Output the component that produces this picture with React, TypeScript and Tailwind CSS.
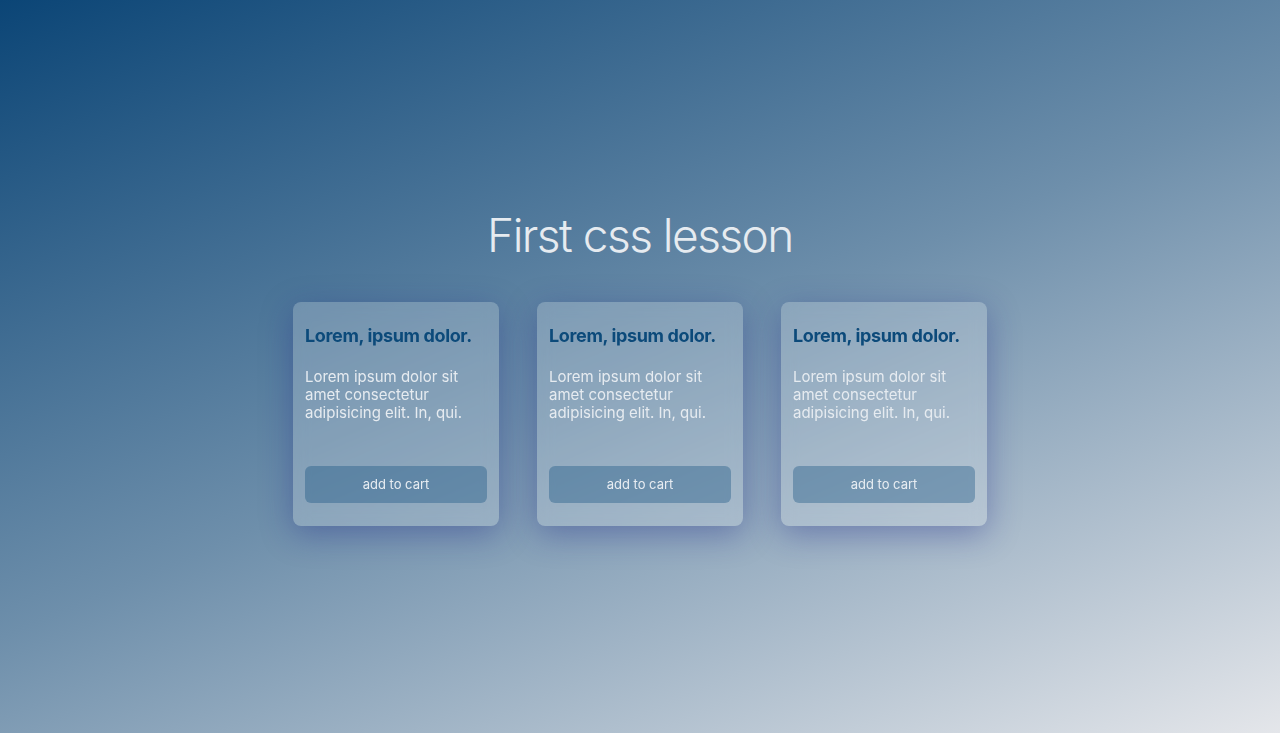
const cards = [1, 2, 3];

function Card() {
  return (
    <div className="flex h-[224px] w-[206px] flex-col rounded-lg bg-white/20 px-3 pt-[22px] pb-[23px] shadow-[0_8px_32px_rgba(31,38,135,0.37)] backdrop-blur-sm">
      <h2 className="text-[18px] leading-[24px] font-bold tracking-[-0.02em] text-[#0c4a7a]">Lorem, ipsum dolor.</h2>
      <p className="mt-5 text-[15px] leading-[18px] text-[#e6ebf0]">
        Lorem ipsum dolor sit amet consectetur adipisicing elit. In, qui.
      </p>
      <button className="mt-auto h-[37px] w-full rounded-md bg-[#0c4a7a]/35 text-[13px] text-[#e8edf2]">
        add to cart
      </button>
    </div>
  );
}

export default function App() {
  return (
    <div className="flex h-[733px] w-full flex-col items-center justify-center bg-[linear-gradient(157deg,#0b4576_0%,#6e8fab_50%,#e4e6ea_100%)] pt-[4px] font-['Inter',sans-serif]">
      <h1 className="text-[46px] leading-[48px] font-light tracking-[-0.033em] text-[#e6ebf0]">First css lesson</h1>
      <div className="mt-[43px] flex gap-[38px]">
        {cards.map((id) => (
          <Card key={id} />
        ))}
      </div>
    </div>
  );
}
